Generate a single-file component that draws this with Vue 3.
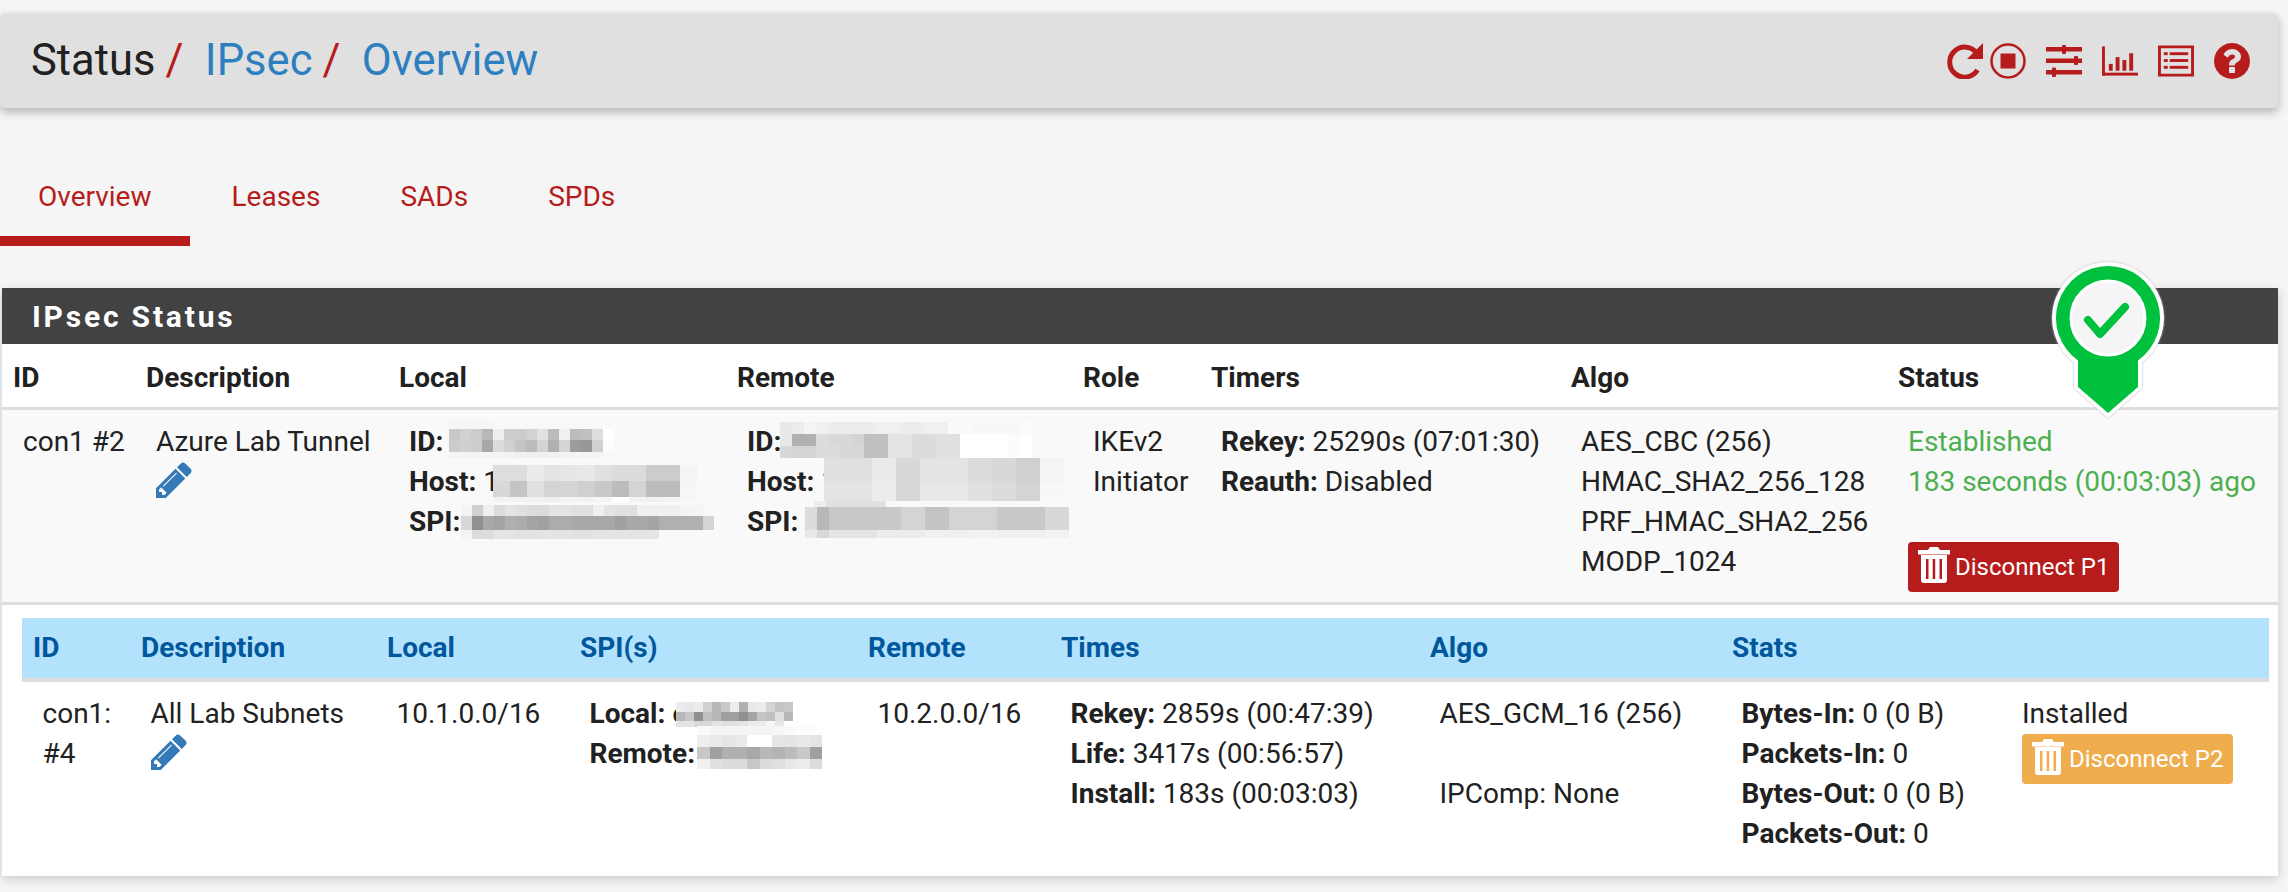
<script setup>
const mosaic = (cell, rows) => {
  const rects = []
  let maxX = 0
  let maxY = 0
  rows.forEach(([dx, y, h, cells]) => {
    cells.split(' ').forEach((g, i) => {
      const x = dx + i * cell
      rects.push({ x, y, w: cell, h, fill: '#' + g + g + g })
      maxX = Math.max(maxX, x + cell)
      maxY = Math.max(maxY, y + h)
    })
  })
  return { rects, w: maxX, h: maxY }
}

const masks = {
  localId: mosaic(11, [
    [0, 0, 8, 'f6 f6 f6 f6 f8 f8 f8 f8 f8 f8 f8 f8 f8 f8'],
    [0, 8, 11, 'c8 d2 cc b8 ee cc cc d2 e2 bc f0 bc c0 dd ff'],
    [0, 19, 12, 'cc d0 cc a8 dc d0 c4 bc d4 b0 d4 9c 98 d0 fc'],
    [0, 31, 6, 'f4 f4 f4 f4 f4 f2 f0 f0 f0 f0 f2 f4 f4 f4 f8']
  ]),
  localHost: mosaic(17, [
    [0, 0, 16, 'dd dd eb e4 e6 e8 e0 dc dc cc cc f4'],
    [0, 16, 16, 'd8 c4 e0 d4 d4 d0 c8 bc d4 bc bc f6'],
    [0, 32, 5, 'f2 f2 f2 f0 f4 f2 f4 ff f2 f0 f4 f6']
  ]),
  localSpi: mosaic(11, [
    [0, 0, 11, 'f4 d0 f0 dc e4 e0 dc dc e4 e4 e0 e0 f0 e4 e0 e0 f0 f0 f0 f0 f4 f4 f8'],
    [0, 11, 14, 'd8 90 a8 a4 b0 ac a4 a0 ac ac a8 a8 a8 a8 a0 a8 a8 a4 b0 b0 b0 b0 d4'],
    [0, 25, 9, 'f4 dc dc e4 e4 e2 e2 e4 e4 e4 e2 e2 e4 e4 e4 e4 e4 e4']
  ]),
  remoteId: mosaic(12, [
    [0, 0, 12, 'e8 ec f4 f0 ec ec ec ec f0 f0 ec ec f0 f0 fa fa f8 f8 f8 f8 fc'],
    [0, 12, 12, 'e8 b0 b0 dc d8 d8 d4 c0 c0 e4 e4 dc dc e0 e0 ff ff ff ff fb ff'],
    [0, 24, 12, 'd8 d4 d4 dc dc d8 d8 c0 c0 e4 e4 dc dc e0 e0 ff ff ff ff fb ff']
  ]),
  remoteHost: mosaic(24, [
    [0, 0, 24, 'e0 e0 ea d8 e4 e4 dc d8 d0 f4'],
    [0, 24, 19, 'e4 e4 ec d8 e8 e8 e0 dc d4 f8']
  ]),
  remoteSpi: mosaic(12, [
    [9, 0, 6, 'ec e0 e0 e0 e0 e0'],
    [0, 6, 23, 'dc b8 c8 c8 c8 c8 c8 c8 d4 d4 c4 c4 d4 d4 d4 d4 c8 c8 c8 c8 d8 d8'],
    [0, 29, 8, 'e8 d8 e4 e4 e4 e4 ec ec ec ec f0 f0 f0 f0 f2 f2 f0 f0 f0 f0 f2 f2']
  ]),
  subLocal: mosaic(9, [
    [0, 0, 10, 'ec e8 ec d0 b8 c8 ec b0 e8 ec d4 c4 c8'],
    [0, 10, 9, 'b8 c8 90 c0 b8 a0 a0 90 a4 c4 c0 e0 b8'],
    [0, 19, 6, 'e4 e4 d8 d8 e4 e0 e0 e4 ec ec f8 e8 ff']
  ]),
  subRemote: mosaic(12.500, [
    [0, 0, 9, 'fa f4 f4 f4 f4 f4 f6 fa fc fc'],
    [0, 9, 12, 'ee ea e6 ea ff ff e6 e4 e8 e4'],
    [0, 21, 12, 'c8 a0 b0 b0 a8 b8 b4 bc c8 a0'],
    [0, 33, 10, 'f0 e0 dc dc c8 dc e0 e8 ec dc']
  ])
}

const mainCols = [133, 253, 338, 346, 128, 360, 327, 391]
const subCols = [108, 246, 193, 288, 193, 369, 302, 290, 258]
const mainHeads = ['ID', 'Description', 'Local', 'Remote', 'Role', 'Timers', 'Algo', 'Status']
const subHeads = ['ID', 'Description', 'Local', 'SPI(s)', 'Remote', 'Times', 'Algo', 'Stats', '']
const pencil = 'M491 1536l91-91-235-235-91 91v107h128v128h107zm523-928q0-22-22-22-10 0-17 7l-542 542q-7 7-7 17 0 22 22 22 10 0 17-7l542-542q7-7 7-17zm-54-192l416 416-832 832h-416v-416zm683 96q0 53-37 90l-166 166-416-416 166-165q36-38 90-38 53 0 91 38l235 234q37 39 37 91z'
</script>

<template>
  <div class="page">
    <header class="topbar">
      <h1 class="crumbs">
        <span>Status</span><span class="sep">/</span>
        <a>IPsec</a><span class="sep">/</span>
        <a>Overview</a>
      </h1>
      <div class="actions">
        <svg class="ic" viewBox="0 0 36 36"><path d="M30 10.500A15 15 0 1 0 30.500 27" fill="none" stroke="#b71c1c" stroke-width="5"/><path d="M36 0v16H20z"/></svg>
        <svg class="ic" viewBox="0 0 36 36"><circle cx="18" cy="18" r="16.500" fill="none" stroke="#b71c1c" stroke-width="2.500"/><rect x="10.500" y="10.500" width="15" height="15"/></svg>
        <svg class="ic gap" viewBox="0 0 36 32"><rect x="0" y="2" width="36" height="4.500"/><rect x="0" y="13.500" width="36" height="4.500"/><rect x="0" y="25" width="36" height="4.500"/><rect x="16" y="0" width="4" height="9" rx="1"/><rect x="28" y="11" width="4" height="9" rx="1"/><rect x="6" y="22.500" width="4" height="9.500" rx="1"/></svg>
        <svg class="ic" viewBox="0 0 37 30"><rect x="0" y="0" width="3" height="30"/><rect x="0" y="27" width="37" height="3"/><rect x="7" y="18" width="4" height="7"/><rect x="14" y="11" width="4" height="14"/><rect x="21" y="14" width="4" height="11"/><rect x="28" y="7" width="4" height="18"/></svg>
        <svg class="ic" viewBox="0 0 37 32"><path fill-rule="evenodd" d="M0 0h37v32H0zM3 3v26h31V3z"/><rect x="6" y="7" width="4" height="3"/><rect x="12" y="7" width="19" height="3"/><rect x="6" y="14" width="4" height="3"/><rect x="12" y="14" width="19" height="3"/><rect x="6" y="21" width="4" height="3"/><rect x="12" y="21" width="19" height="3"/></svg>
        <svg class="ic" viewBox="128 128 1536 1536"><path d="M1024 1376v-192q0-14-9-23t-23-9h-192q-14 0-23 9t-9 23v192q0 14 9 23t23 9h192q14 0 23-9t9-23zm256-672q0-88-55.500-163t-138.500-116-170-41q-243 0-371 213-15 24 8 42l132 100q7 6 19 6 16 0 25-12 53-68 86-92 34-24 86-24 48 0 85.500 26t37.500 59q0 38-20 61t-68 45q-63 28-115.500 86.500t-52.500 125.500v36q0 14 9 23t23 9h192q14 0 23-9t9-23q0-19 21.500-49.500t54.500-49.500q32-18 49-28.500t46-35 44.500-48 28-60.500 12.500-81zm384 192q0 209-103 385.500t-279.500 279.500-385.500 103-385.500-103-279.500-279.500-103-385.500 103-385.500 279.500-279.500 385.500-103 385.500 103 279.500 279.500 103 385.500z"/></svg>
      </div>
    </header>

    <nav class="tabs">
      <a class="tab active">Overview</a>
      <a class="tab">Leases</a>
      <a class="tab">SADs</a>
      <a class="tab">SPDs</a>
    </nav>

    <section class="panel">
      <h2 class="panel-title">IPsec Status</h2>

      <svg class="pin" viewBox="0 0 116 162">
        <path class="pin-edge" d="M58 2a56 56 0 0 1 34 100.500V128L58 158 24 128V102.500A56 56 0 0 1 58 2z"/>
        <path class="pin-fill" d="M58 6a52 52 0 0 1 30 94.500V127L58 153 28 127V100.500A52 52 0 0 1 58 6z"/>
        <circle class="pin-hole" cx="58" cy="58" r="37"/>
        <path class="pin-check" d="M38 60l12 14 25-27"/>
      </svg>

      <table class="main">
        <colgroup><col v-for="(w, i) in mainCols" :key="i" :style="{ width: w + 'px' }" /></colgroup>
        <thead>
          <tr><th v-for="h in mainHeads" :key="h">{{ h }}</th></tr>
        </thead>
        <tbody>
          <tr class="p1">
            <td>con1 #2</td>
            <td>Azure Lab Tunnel<br /><svg class="pencil" viewBox="128 128 1536 1536"><path :d="pencil" /></svg></td>
            <td>
              <b>ID:</b> <span class="mask" style="left:-1px;top:-1px"><svg :width="masks.localId.w" :height="masks.localId.h"><rect v-for="(r, i) in masks.localId.rects" :key="i" :x="r.x" :y="r.y" :width="r.w" :height="r.h" :fill="r.fill" /></svg></span><br />
              <b>Host:</b> 1<span class="mask" style="left:-6px;top:3px"><svg :width="masks.localHost.w" :height="masks.localHost.h"><rect v-for="(r, i) in masks.localHost.rects" :key="i" :x="r.x" :y="r.y" :width="r.w" :height="r.h" :fill="r.fill" /></svg></span><br />
              <b>SPI:</b> <span class="mask" style="left:-6px;top:3px"><svg :width="masks.localSpi.w" :height="masks.localSpi.h"><rect v-for="(r, i) in masks.localSpi.rects" :key="i" :x="r.x" :y="r.y" :width="r.w" :height="r.h" :fill="r.fill" /></svg></span>
            </td>
            <td>
              <b>ID:</b> 2<span class="mask" style="left:-24px;top:0px"><svg :width="masks.remoteId.w" :height="masks.remoteId.h"><rect v-for="(r, i) in masks.remoteId.rects" :key="i" :x="r.x" :y="r.y" :width="r.w" :height="r.h" :fill="r.fill" /></svg></span><br />
              <b>Host:</b> 1<span class="mask" style="left:-13px;top:-4px"><svg :width="masks.remoteHost.w" :height="masks.remoteHost.h"><rect v-for="(r, i) in masks.remoteHost.rects" :key="i" :x="r.x" :y="r.y" :width="r.w" :height="r.h" :fill="r.fill" /></svg></span><br />
              <b>SPI:</b> <span class="mask" style="left:0px;top:-1px"><svg :width="masks.remoteSpi.w" :height="masks.remoteSpi.h"><rect v-for="(r, i) in masks.remoteSpi.rects" :key="i" :x="r.x" :y="r.y" :width="r.w" :height="r.h" :fill="r.fill" /></svg></span>
            </td>
            <td>IKEv2<br />Initiator</td>
            <td><b>Rekey:</b> 25290s (07:01:30)<br /><b>Reauth:</b> Disabled</td>
            <td>AES_CBC (256)<br />HMAC_SHA2_256_128<br />PRF_HMAC_SHA2_256<br />MODP_1024</td>
            <td class="status">
              <div class="ok">Established</div>
              <div class="ok">183 seconds (00:03:03) ago</div>
              <a class="btn danger">
                <svg class="trash" viewBox="0 0 32 36"><path class="t-body" fill-rule="evenodd" d="M3 8h26v25a3 3 0 0 1-3 3H6a3 3 0 0 1-3-3zM8 12v20h2.500V12zM14.700 12v20h2.500V12zM21.500 12v20h2.500V12z"/><path class="t-body" d="M0 3h10l2-3h8l2 3h10v4.500H0z"/></svg>
                Disconnect P1
              </a>
            </td>
          </tr>
          <tr class="p2">
            <td colspan="8">
              <table class="sub">
                <colgroup><col v-for="(w, i) in subCols" :key="i" :style="{ width: w + 'px' }" /></colgroup>
                <thead>
                  <tr><th v-for="(h, i) in subHeads" :key="i">{{ h }}</th></tr>
                </thead>
                <tbody>
                  <tr>
                    <td>con1:<br />#4</td>
                    <td>All Lab Subnets<br /><svg class="pencil" viewBox="128 128 1536 1536"><path :d="pencil" /></svg></td>
                    <td>10.1.0.0/16</td>
                    <td>
                      <b>Local:</b> e<span class="mask" style="left:-11px;top:8px"><svg :width="masks.subLocal.w" :height="masks.subLocal.h"><rect v-for="(r, i) in masks.subLocal.rects" :key="i" :x="r.x" :y="r.y" :width="r.w" :height="r.h" :fill="r.fill" /></svg></span><br />
                      <b>Remote:</b> <span class="mask" style="left:-5px;top:-8px"><svg :width="masks.subRemote.w" :height="masks.subRemote.h"><rect v-for="(r, i) in masks.subRemote.rects" :key="i" :x="r.x" :y="r.y" :width="r.w" :height="r.h" :fill="r.fill" /></svg></span>
                    </td>
                    <td>10.2.0.0/16</td>
                    <td><b>Rekey:</b> 2859s (00:47:39)<br /><b>Life:</b> 3417s (00:56:57)<br /><b>Install:</b> 183s (00:03:03)</td>
                    <td>AES_GCM_16 (256)<br /><br />IPComp: None</td>
                    <td><b>Bytes-In:</b> 0 (0 B)<br /><b>Packets-In:</b> 0<br /><b>Bytes-Out:</b> 0 (0 B)<br /><b>Packets-Out:</b> 0</td>
                    <td class="last">
                      Installed
                      <a class="btn warning">
                        <svg class="trash" viewBox="0 0 32 36"><path class="t-body" fill-rule="evenodd" d="M3 8h26v25a3 3 0 0 1-3 3H6a3 3 0 0 1-3-3zM8 12v20h2.500V12zM14.700 12v20h2.500V12zM21.500 12v20h2.500V12z"/><path class="t-body" d="M0 3h10l2-3h8l2 3h10v4.500H0z"/></svg>
                        Disconnect P2
                      </a>
                    </td>
                  </tr>
                </tbody>
              </table>
            </td>
          </tr>
        </tbody>
      </table>
    </section>
  </div>
</template>

<style scoped>
.page {
  width: 2288px;
  height: 892px;
  padding-top: 13px;
  box-sizing: border-box;
  overflow: hidden;
  background: #f5f5f5;
  font-family: Roboto, sans-serif;
  font-size: 28px;
  line-height: 40px;
  color: #212121;
}
.topbar {
  margin: 0 10px 0 0;
  height: 95px;
  background: #e0e0e0;
  border-radius: 5px;
  box-shadow: 0 4px 10px rgba(0, 0, 0, 0.28);
  display: flex;
  align-items: center;
  justify-content: space-between;
  padding: 0 28px 0 31px;
}
.crumbs {
  margin: 0;
  font-size: 43.500px;
  font-weight: 400;
  line-height: 56px;
  display: flex;
}
.crumbs a {
  color: #2d7fc0;
}
.sep {
  color: #b71c1c;
  margin: 0 21.500px 0 10px;
}
.actions {
  display: flex;
  align-items: center;
  gap: 20px;
}
.ic {
  width: 36px;
  height: 36px;
  fill: #b71c1c;
  display: block;
}
.actions .ic:first-child {
  margin-right: -13px;
}
.tabs {
  display: flex;
  height: 138px;
  align-items: flex-end;
}
.tab {
  color: #b71c1c;
  padding: 0 40px 19px;
  border-bottom: 10px solid transparent;
  line-height: 40px;
}
.tab.active {
  padding: 0 38px 19px;
  margin-right: 2px;
  border-bottom-color: #b71c1c;
}
.panel {
  position: relative;
  margin: 42px 10px 0 2px;
  background: #fff;
  box-shadow: 0 3px 10px rgba(0, 0, 0, 0.18);
}
.panel-title {
  margin: 0;
  height: 56px;
  background: #424242;
  color: #fff;
  font-size: 30px;
  font-weight: 700;
  line-height: 58px;
  letter-spacing: 2.800px;
  padding-left: 30px;
}
.pin {
  position: absolute;
  left: 2048px;
  top: -28px;
  width: 116px;
  height: 162px;
  z-index: 2;
}
.pin-edge {
  fill: #fff;
  filter: drop-shadow(0 0 1px #bbb);
}
.pin-fill {
  fill: #00c13e;
}
.pin-hole {
  fill: #f5f5f5;
  stroke: #fff;
  stroke-width: 3;
}
.pin-check {
  fill: none;
  stroke: #00c13e;
  stroke-width: 8;
  stroke-linecap: round;
  stroke-linejoin: round;
}
table {
  border-collapse: collapse;
  table-layout: fixed;
  width: 100%;
}
th {
  text-align: left;
  font-weight: 700;
}
b {
  font-weight: 700;
}
.main > thead th {
  height: 59px;
  padding: 4px 0 0 11px;
  border-bottom: 3px solid #ddd;
}
.p1 {
  background: #f9f9f9;
}
.p1 > td {
  height: 180px;
  padding: 12px 0 0 21px;
  vertical-align: top;
  border-bottom: 3px solid #ddd;
  box-sizing: content-box;
}
.status {
  white-space: nowrap;
}
.ok {
  color: #4caf50;
}
.p2 > td {
  padding: 13px 9px 22px 20px;
  background: #fff;
}
.sub th {
  height: 60px;
  padding: 0 0 0 11px;
  background: #b3e2fd;
  color: #01579b;
  border-bottom: 4px solid #ddd;
}
.sub td {
  padding: 12px 0 0 20.500px;
  vertical-align: top;
}
.sub td.last {
  padding-left: 11px;
}
.pencil {
  width: 36px;
  height: 36px;
  fill: #337ab7;
  display: block;
}
.mask {
  position: relative;
  display: inline-block;
  width: 0;
  height: 0;
  vertical-align: top;
}
.mask svg {
  position: absolute;
  left: 0;
  top: 0;
  shape-rendering: crispEdges;
}
.btn {
  display: flex;
  width: 211px;
  height: 50px;
  align-items: center;
  box-sizing: border-box;
  padding-left: 10px;
  gap: 5px;
  border-radius: 4px;
  color: #fff;
  font-size: 24px;
  line-height: 32px;
}
.btn.danger {
  margin-top: 40px;
  background: #b71c1c;
}
.btn.warning {
  background: #f0ad4e;
}
.trash {
  width: 32px;
  height: 36px;
  flex: none;
  margin-top: -5px;
}
.t-body {
  fill: #fff;
}
</style>

<style>
html, body {
  background: #f5f5f5;
}
</style>
